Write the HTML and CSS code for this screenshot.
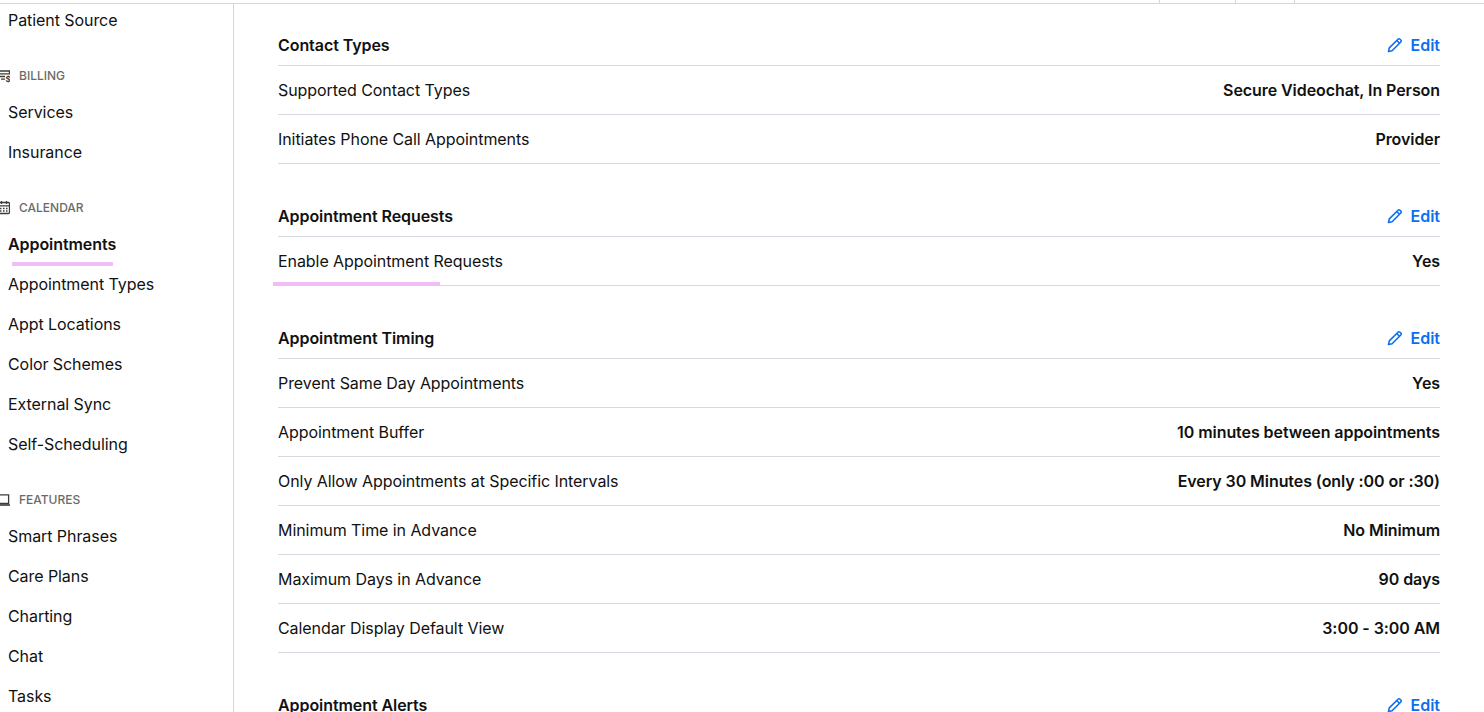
FILE: index.html
```html
<!DOCTYPE html>
<html lang="en">
<head>
    <meta charset="UTF-8">
    <title>Appointment Settings</title>
    <link rel="stylesheet" href="styles.css">
</head>
<body>
<div class="top-bar">
    <span class="top-tab tab-a"></span>
    <span class="top-tab tab-b"></span>
    <span class="top-tab tab-c"></span>
</div>
<div class="layout">
    <nav class="sidebar">
        <a class="nav-item nav-first">Patient Source</a>

        <div class="nav-heading">
            <svg class="nav-icon" viewBox="0 0 16 16" fill="none" stroke="#3d3d3a" stroke-width="1.3"><path d="M1 4h15M3 6.800h13M5 9.500h6M7 12.200h4"/><path d="M15.500 4v3"/><text x="11.500" y="15" font-size="8" font-weight="700" fill="#3d3d3a" stroke="none" font-family="Inter">$</text></svg>
            <span>BILLING</span>
        </div>
        <a class="nav-item">Services</a>
        <a class="nav-item">Insurance</a>

        <div class="nav-heading">
            <svg class="nav-icon" viewBox="0 0 16 16" fill="none" stroke="#3d3d3a" stroke-width="1.300"><rect x="3" y="3.500" width="12.500" height="11" rx="1"/><path d="M3 6.800h12.500M7.500 2v3M12.500 2v3"/><path d="M6 9.500h1.500M9 9.500h1.500M12 9.500h1.500M6 12h1.500M9 12h1.500M12 12h1.500"/></svg>
            <span>CALENDAR</span>
        </div>
        <a class="nav-item nav-active">Appointments</a>
        <a class="nav-item">Appointment Types</a>
        <a class="nav-item">Appt Locations</a>
        <a class="nav-item">Color Schemes</a>
        <a class="nav-item">External Sync</a>
        <a class="nav-item">Self-Scheduling</a>

        <div class="nav-heading">
            <svg class="nav-icon" viewBox="0 0 16 16" fill="none" stroke="#3d3d3a" stroke-width="1.300"><path d="M2 3.800h12.600v8.700H2z"/><path d="M0 14h16" stroke-width="1.600"/></svg>
            <span>FEATURES</span>
        </div>
        <a class="nav-item">Smart Phrases</a>
        <a class="nav-item">Care Plans</a>
        <a class="nav-item">Charting</a>
        <a class="nav-item">Chat</a>
        <a class="nav-item">Tasks</a>
    </nav>

    <main class="content">
        <section class="group">
            <div class="group-head">
                <h2>Contact Types</h2>
                <a class="edit"><svg class="pencil" viewBox="0 0 16 16" fill="none" stroke="#0b6ff0" stroke-width="1.600" stroke-linejoin="round"><path d="M1.500 14.500l.8-3.600L11 2.200a1.400 1.400 0 0 1 2 0l.8.8a1.400 1.400 0 0 1 0 2L5.100 13.700z"/><path d="M9.700 3.500l2.800 2.800"/></svg>Edit</a>
            </div>
            <div class="row"><span>Supported Contact Types</span><b>Secure Videochat, In Person</b></div>
            <div class="row"><span>Initiates Phone Call Appointments</span><b>Provider</b></div>
        </section>

        <section class="group">
            <div class="group-head">
                <h2>Appointment Requests</h2>
                <a class="edit"><svg class="pencil" viewBox="0 0 16 16" fill="none" stroke="#0b6ff0" stroke-width="1.600" stroke-linejoin="round"><path d="M1.500 14.500l.8-3.600L11 2.200a1.400 1.400 0 0 1 2 0l.8.8a1.400 1.400 0 0 1 0 2L5.100 13.700z"/><path d="M9.700 3.500l2.800 2.800"/></svg>Edit</a>
            </div>
            <div class="row row-marked"><span>Enable Appointment Requests</span><b>Yes</b></div>
        </section>

        <section class="group">
            <div class="group-head">
                <h2>Appointment Timing</h2>
                <a class="edit"><svg class="pencil" viewBox="0 0 16 16" fill="none" stroke="#0b6ff0" stroke-width="1.600" stroke-linejoin="round"><path d="M1.500 14.500l.8-3.600L11 2.200a1.400 1.400 0 0 1 2 0l.8.8a1.400 1.400 0 0 1 0 2L5.100 13.700z"/><path d="M9.700 3.500l2.800 2.800"/></svg>Edit</a>
            </div>
            <div class="row"><span>Prevent Same Day Appointments</span><b>Yes</b></div>
            <div class="row"><span>Appointment Buffer</span><b>10 minutes between appointments</b></div>
            <div class="row"><span>Only Allow Appointments at Specific Intervals</span><b>Every 30 Minutes (only :00 or :30)</b></div>
            <div class="row"><span>Minimum Time in Advance</span><b>No Minimum</b></div>
            <div class="row"><span>Maximum Days in Advance</span><b>90 days</b></div>
            <div class="row"><span>Calendar Display Default View</span><b>3:00 - 3:00 AM</b></div>
        </section>

        <section class="group">
            <div class="group-head">
                <h2>Appointment Alerts</h2>
                <a class="edit"><svg class="pencil" viewBox="0 0 16 16" fill="none" stroke="#0b6ff0" stroke-width="1.600" stroke-linejoin="round"><path d="M1.500 14.500l.8-3.600L11 2.200a1.400 1.400 0 0 1 2 0l.8.8a1.400 1.400 0 0 1 0 2L5.100 13.700z"/><path d="M9.700 3.500l2.800 2.800"/></svg>Edit</a>
            </div>
        </section>
    </main>
</div>
</body>
</html>
```

FILE: styles.css
```css
html, body {
    margin: 0;
    height: 100%;
    overflow: hidden;
    background: #fff;
}
body {
    font-family: Inter, "Liberation Sans", sans-serif;
    font-size: 16px;
    letter-spacing: -0.07px;
    color: #111;
}
.top-bar {
    height: 3px;
    border-bottom: 1px solid #d5d7dc;
    display: flex;
    justify-content: flex-end;
}
.top-tab {
    border-left: 1px solid #d5d7dc;
}
.tab-a { width: 75px; }
.tab-b { width: 58px; }
.tab-c { width: 189px; }
.layout {
    display: flex;
    height: 708px;
}
.sidebar {
    width: 233px;
    flex-shrink: 0;
    border-right: 1px solid #d5d7dc;
    overflow: hidden;
}
.nav-item {
    display: block;
    height: 40px;
    line-height: 40px;
    padding-left: 8px;
    font-size: 16px;
    color: #111;
    position: relative;
}
.nav-first {
    margin-top: -4px;
}
.nav-heading {
    display: flex;
    align-items: center;
    height: 22px;
    margin-top: 24px;
    margin-bottom: 6px;
    font-size: 12px;
    font-weight: 500;
    letter-spacing: 0;
    color: #6b6b66;
}
.nav-icon {
    width: 16px;
    height: 16px;
    margin-left: -6px;
    margin-right: 9px;
    flex-shrink: 0;
}
.nav-active {
    font-weight: 600;
}
.nav-active::after {
    content: "";
    position: absolute;
    left: 12px;
    top: 38px;
    width: 101px;
    height: 4px;
    background: #f0bdf6;
}
.content {
    flex: 1;
    padding: 21px 44px 0;
    min-width: 0;
}
.group {
    margin-bottom: 32px;
}
.group-head {
    display: flex;
    justify-content: space-between;
    align-items: center;
    height: 40px;
    border-bottom: 1px solid #d5d9e0;
}
.group-head h2 {
    margin: 0;
    font-size: 16px;
    font-weight: 600;
}
.edit {
    display: flex;
    align-items: center;
    gap: 7px;
    color: #0b6ff0;
    font-weight: 600;
    letter-spacing: 0;
}
.pencil {
    width: 16px;
    height: 16px;
}
.row {
    display: flex;
    justify-content: space-between;
    align-items: center;
    height: 48px;
    border-bottom: 1px solid #d5d9e0;
}
.row b {
    font-weight: 600;
}
.row-marked {
    position: relative;
}
.row-marked::after {
    content: "";
    position: absolute;
    left: -5px;
    bottom: -1px;
    width: 167px;
    height: 4px;
    background: #f0bdf6;
}
```
